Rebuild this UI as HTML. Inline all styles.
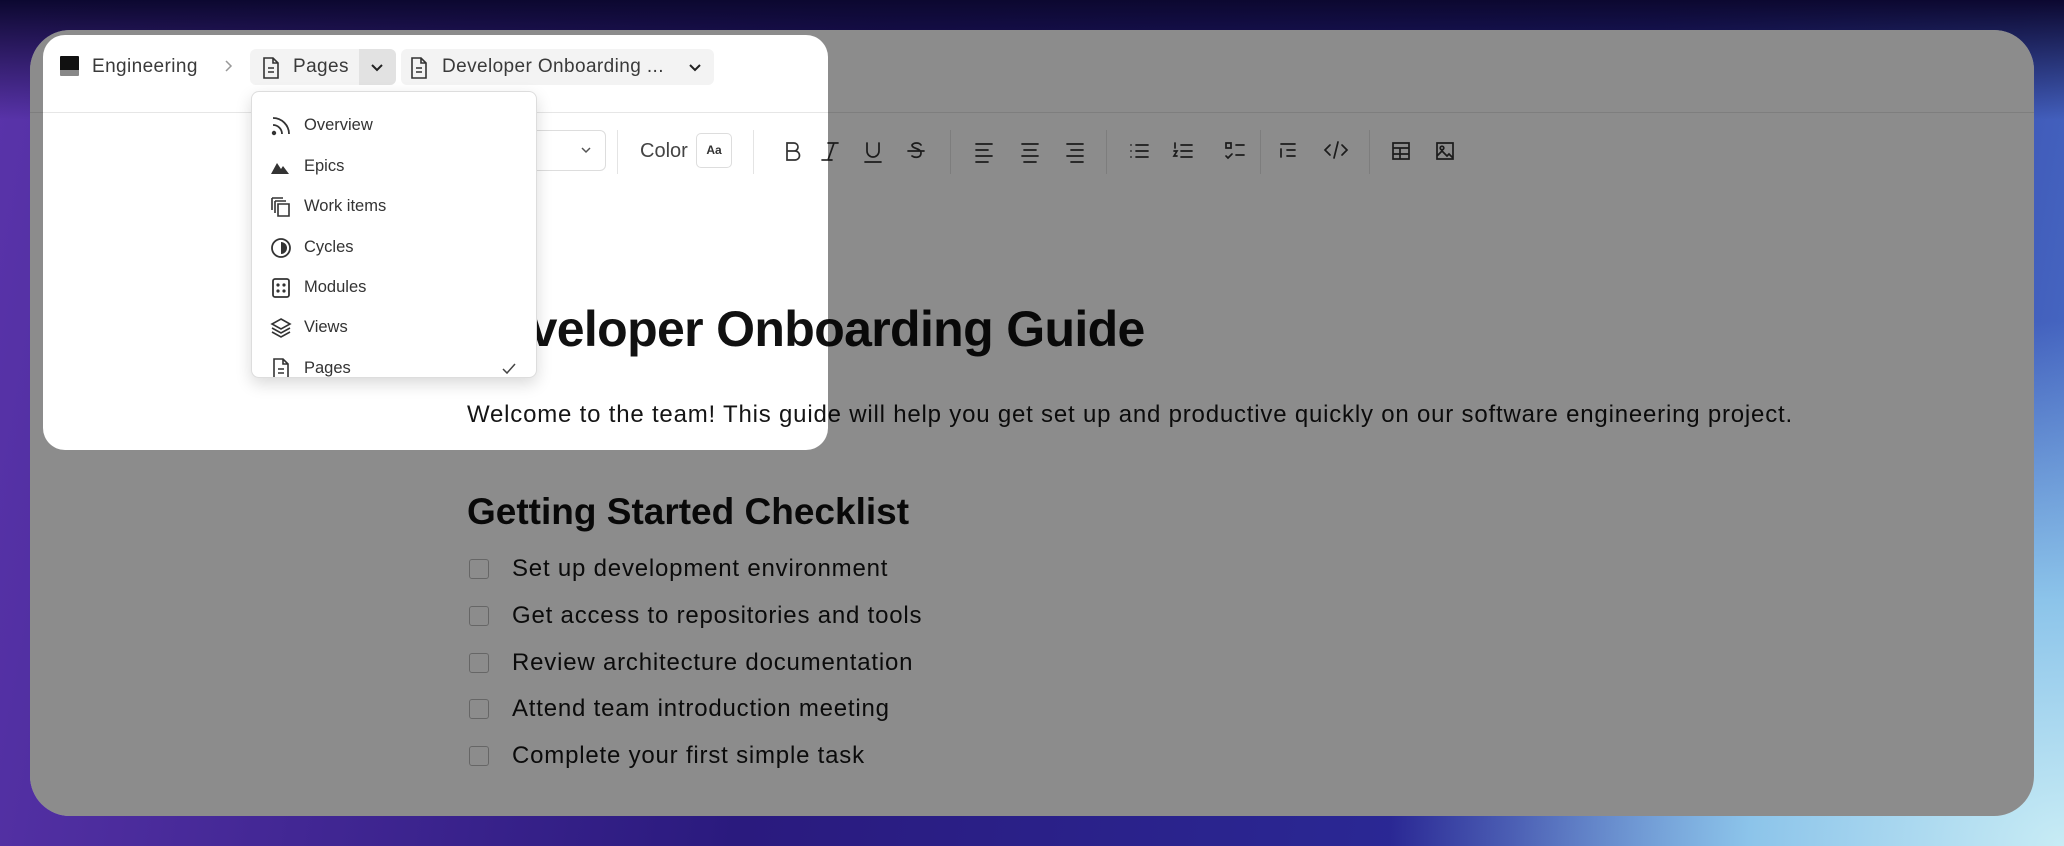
<!DOCTYPE html>
<html><head><meta charset="utf-8"><style>
*{margin:0;padding:0;box-sizing:border-box}
body{width:2064px;height:846px;overflow:hidden;position:relative;font-family:"Liberation Sans",sans-serif;color:#1c1c1c;
background:radial-gradient(ellipse 900px 700px at 2064px 846px,#c8ecf5 0%,#8cc4ea 35%,rgba(80,120,210,0) 75%),linear-gradient(100deg,#5a34aa 0%,#2a1a7e 40%,#2a2a98 75%,#4a70c8 100%);}
.top{position:absolute;left:0;top:0;width:2064px;height:120px;background:linear-gradient(180deg,#0c0830 0%,rgba(20,12,90,0) 100%)}
.win{position:absolute;left:30px;top:30px;width:2004px;height:786px;border-radius:40px;background:#fff;overflow:hidden}
.abs{position:absolute}
.hline{position:absolute;left:0;top:82px;width:100%;height:1px;background:#e6e6e6}
.spot{position:absolute;left:13px;top:5px;width:785px;height:415px;border-radius:22px;box-shadow:0 0 0 3000px rgba(0,0,0,0.45);z-index:5}
.bc{position:absolute;font-size:19px;color:#3a3a3a;top:25px;line-height:24px;z-index:6;letter-spacing:0.4px}
.btn{position:absolute;background:#f3f3f3;border-radius:6px;z-index:6}
.dd{position:absolute;left:221px;top:61px;width:286px;height:287px;background:#fff;border:1px solid #ddd;border-radius:8px;box-shadow:0 6px 16px rgba(0,0,0,.15);z-index:7;overflow:hidden}
.it{position:absolute;left:52px;font-size:16.5px;color:#333}
.ic{position:absolute;left:17px}
.sep{position:absolute;top:100px;width:1px;height:44px;background:#e4e4e4}
h1{position:absolute;left:437px;top:270px;font-size:50px;font-weight:bold;letter-spacing:-0.65px;color:#111;white-space:nowrap}
.p{position:absolute;left:437px;top:371px;font-size:24px;letter-spacing:0.8px;color:#151515;white-space:nowrap}
h2{position:absolute;left:437px;top:461px;font-size:37px;font-weight:bold;color:#111;white-space:nowrap}
.cb{position:absolute;left:439px;width:20px;height:20px;border:1.5px solid #bbb;border-radius:3px}
.ct{position:absolute;left:482px;font-size:24px;letter-spacing:0.8px;color:#151515;white-space:nowrap}
</style></head><body>
<div class="top"></div>
<div class="win">
 <div class="hline"></div>
 <!-- toolbar -->
 <div class="abs" style="left:440px;top:100px;width:136px;height:41px;border:1px solid #ddd;border-radius:6px"></div>
 <svg class="abs" style="left:549px;top:113px" width="14" height="14" viewBox="0 0 14 14"><path d="M3 5l4 4 4-4" fill="none" stroke="#555" stroke-width="1.5"/></svg>
 <div class="sep" style="left:587px"></div>
 <div class="abs" style="left:610px;top:110px;font-size:20px;color:#444">Color</div>
 <div class="abs" style="left:666px;top:103px;width:36px;height:35px;border:1px solid #ddd;border-radius:5px;font-size:12px;font-weight:bold;text-align:center;line-height:33px;color:#333">Aa</div>
 <div class="sep" style="left:723px"></div>
 <svg class="abs" style="left:744px;top:108px" width="1290" height="30" viewBox="744 108 1290 30" fill="none" stroke="#333" stroke-width="1.7" stroke-linecap="round">
  <g transform="translate(-12 0)">
  <path d="M769 113h7a4 4 0 0 1 0 8h-7zM769 121h8a4.5 4.5 0 0 1 0 9h-8z"/>
  <path d="M810 113h10M804 130h10M816 113l-6 17"/>
  <path d="M849 113v8a6 6 0 0 0 12 0v-8M847 132h16"/>
  <path d="M890 121h16M903 115a5 3.5 0 0 0-9 0c0 4 9 3 9 8s-6 5-9 3"/>
  </g>
  <path d="M946 114h16M946 120h12M946 126h16M946 132h12"/>
  <path d="M992 114h16M994 120h12M992 126h16M994 132h12"/>
  <path d="M1037 114h16M1041 120h12M1037 126h16M1041 132h12"/>
  <path d="M1106 115h12M1106 121h12M1106 127h12M1101 115h0M1101 121h0M1101 127h0"/>
  <path d="M1151 115h11M1151 121h11M1151 127h11M1145 113v5M1144 121h3l-3 5h3"/>
  <path d="M1206 115h8M1206 125h8M1196 113h5v5h-5zM1196 126l2 2 4-4"/>
  <path d="M1251 114h14M1257 120h8M1257 126h8M1251 119v8"/>
  <path d="M1300 115l-5 5 5 5M1312 115l5 5-5 5M1308 112l-4 16"/>
  <path d="M1363 113h16v16h-16zM1363 118h16M1363 124h16M1370 118v11"/>
  <path d="M1407 113h16v16h-16zM1407 126l5-5 5 5 2-2 4 4"/><circle cx="1412" cy="118" r="1.8"/>
 </svg>
 <div class="sep" style="left:920px"></div>
 <div class="sep" style="left:1076px"></div>
 <div class="sep" style="left:1230px"></div>
 <div class="sep" style="left:1339px"></div>
 <!-- content -->
 <h1>Developer Onboarding Guide</h1>
 <div class="p">Welcome to the team! This guide will help you get set up and productive quickly on our software engineering project.</div>
 <h2>Getting Started Checklist</h2>
 <div class="cb" style="top:529px"></div><div class="ct" style="top:525px">Set up development environment</div>
 <div class="cb" style="top:576px"></div><div class="ct" style="top:572px">Get access to repositories and tools</div>
 <div class="cb" style="top:623px"></div><div class="ct" style="top:619px">Review architecture documentation</div>
 <div class="cb" style="top:669px"></div><div class="ct" style="top:665px">Attend team introduction meeting</div>
 <div class="cb" style="top:716px"></div><div class="ct" style="top:712px">Complete your first simple task</div>
 <!-- spotlight -->
 <div class="spot"></div>
 <div class="abs" style="left:30px;top:26px;width:19px;height:20px;background:linear-gradient(#111 70%,#888 70%);z-index:6;border-radius:1px"></div>
 <div class="bc" style="left:62px">Engineering</div>
 <svg class="abs" style="left:191px;top:29px;z-index:6" width="14" height="14" viewBox="0 0 14 14"><path d="M5 2l5 5-5 5" fill="none" stroke="#999" stroke-width="1.5"/></svg>
 <div class="btn" style="left:220px;top:19px;width:146px;height:36px"></div>
 <div class="btn" style="left:329px;top:19px;width:37px;height:36px;background:#e2e2e2;border-radius:0 6px 6px 0"></div>
 <svg class="abs" style="left:230px;top:26px;z-index:6" width="22" height="24" viewBox="0 0 22 24" fill="none" stroke="#333" stroke-width="1.6"><path d="M4 2h9l5 5v15H4zM13 2v5h5M8 12h6M8 16h6"/></svg>
 <div class="bc" style="left:263px">Pages</div>
 <svg class="abs" style="left:339px;top:29px;z-index:6" width="16" height="16" viewBox="0 0 16 16"><path d="M3 6l5 5 5-5" fill="none" stroke="#222" stroke-width="2"/></svg>
 <div class="btn" style="left:371px;top:19px;width:313px;height:36px"></div>
 <svg class="abs" style="left:378px;top:26px;z-index:6" width="22" height="24" viewBox="0 0 22 24" fill="none" stroke="#333" stroke-width="1.6"><path d="M4 2h9l5 5v15H4zM13 2v5h5M8 12h6M8 16h6"/></svg>
 <div class="bc" style="left:412px">Developer Onboarding ...</div>
 <svg class="abs" style="left:657px;top:29px;z-index:6" width="16" height="16" viewBox="0 0 16 16"><path d="M3 6l5 5 5-5" fill="none" stroke="#222" stroke-width="2"/></svg>
 <!-- dropdown -->
 <div class="dd">
  <svg class="ic" style="top:22px" width="24" height="24" viewBox="0 0 24 24" fill="none" stroke="#333" stroke-width="1.8"><path d="M4 11a9 9 0 0 1 9 9M4 4a16 16 0 0 1 16 16"/><circle cx="5" cy="19" r="1.3" fill="#333"/></svg>
  <div class="it" style="top:24px">Overview</div>
  <svg class="ic" style="top:63px" width="24" height="24" viewBox="0 0 24 24"><path d="M2 19L8 8l4 6 2-3 6 8z" fill="#333"/></svg>
  <div class="it" style="top:65px">Epics</div>
  <svg class="ic" style="top:103px" width="24" height="24" viewBox="0 0 24 24" fill="none" stroke="#333" stroke-width="1.6"><path d="M9 9h11v12H9zM6 6h11M3 3h11M6 6v12M3 3v12"/></svg>
  <div class="it" style="top:105px">Work items</div>
  <svg class="ic" style="top:144px" width="24" height="24" viewBox="0 0 24 24"><circle cx="12" cy="12" r="9" fill="none" stroke="#333" stroke-width="1.8"/><path d="M12 6a6 6 0 0 1 0 12z" fill="#333"/></svg>
  <div class="it" style="top:146px">Cycles</div>
  <svg class="ic" style="top:184px" width="24" height="24" viewBox="0 0 24 24"><rect x="4" y="3" width="16" height="18" rx="2" fill="none" stroke="#333" stroke-width="1.8"/><g fill="#333"><circle cx="9" cy="9" r="1.6"/><circle cx="15" cy="9" r="1.6"/><circle cx="9" cy="15" r="1.6"/><circle cx="15" cy="15" r="1.6"/></g></svg>
  <div class="it" style="top:186px">Modules</div>
  <svg class="ic" style="top:224px" width="24" height="24" viewBox="0 0 24 24" fill="none" stroke="#333" stroke-width="1.6"><path d="M12 3l9 5-9 5-9-5zM3 12l9 5 9-5M3 16l9 5 9-5"/></svg>
  <div class="it" style="top:226px">Views</div>
  <svg class="ic" style="top:265px" width="24" height="24" viewBox="0 0 24 24" fill="none" stroke="#333" stroke-width="1.6"><path d="M5 2h9l5 5v15H5zM14 2v5h5M9 12h6M9 16h6"/></svg>
  <div class="it" style="top:267px">Pages</div>
  <svg class="abs" style="left:248px;top:268px" width="18" height="18" viewBox="0 0 18 18"><path d="M3 9l4 4 8-9" fill="none" stroke="#444" stroke-width="1.5"/></svg>
 </div>
</div>
</body></html>
